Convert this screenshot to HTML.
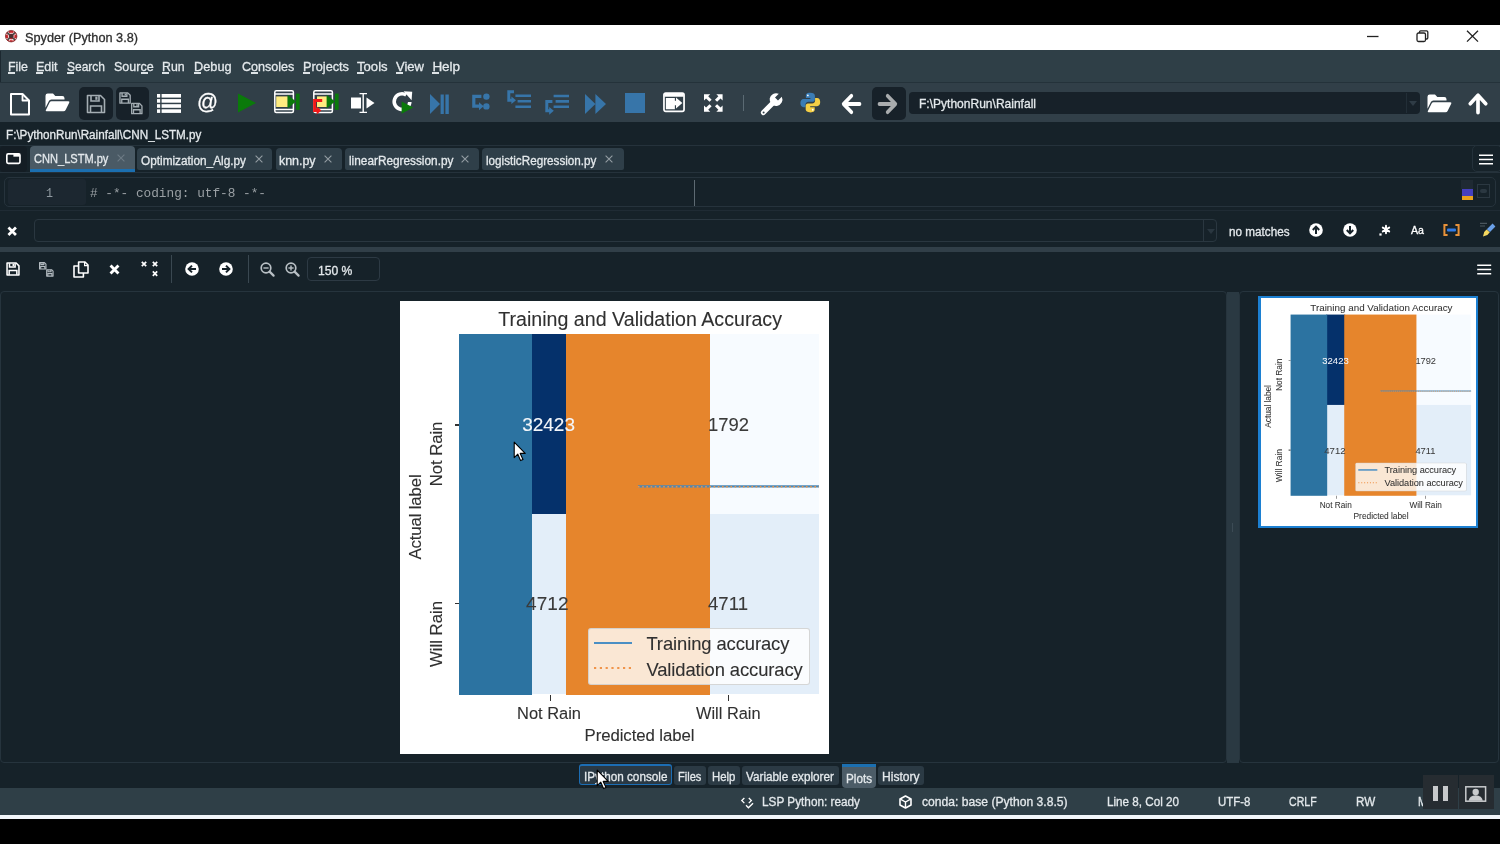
<!DOCTYPE html>
<html lang="en"><head><meta charset="utf-8"><title>Spyder (Python 3.8)</title><style>
html,body{margin:0;padding:0;background:#000;}
body{width:1500px;height:844px;position:relative;overflow:hidden;font-family:'Liberation Sans',sans-serif;}
.b{position:absolute;}
.i{position:absolute;overflow:visible;}
.t{position:absolute;white-space:pre;line-height:20px;height:20px;-webkit-text-stroke:0.3px currentColor;}
#app{position:absolute;left:0;top:0;width:1500px;height:844px;filter:blur(0.7px);}
.plot{position:absolute;left:0;top:0;width:429px;height:453.6px;}
.plot .t{-webkit-text-stroke:0.1px currentColor;}
</style></head>
<body>
<div id="app">
<div class="b" style="left:-10px;top:50.5px;width:1520px;height:765px;background:#162229;"></div><div class="b" style="left:-10px;top:25px;width:1520px;height:25.3px;background:#ffffff;"></div><svg class="i" style="left:5px;top:30px" width="12.4" height="12.4" viewBox="0 0 16 16" ><circle cx="8" cy="8" r="7.4" fill="#c8262c"/><path d="M1 6 Q8 2.6 15 6 M1.4 11 Q8 14 14.6 11 M4.6 1.6 Q3.4 8 5.8 14.6 M11.4 1.6 Q12.6 8 10.2 14.6" stroke="#f4dcdc" stroke-width="1.3" fill="none"/><path d="M3 3.4 L6.4 6.6 M13 3.4 L9.6 6.6 M3.4 13 L6.4 9.6 M12.8 12.8 L9.6 9.6" stroke="#4a4a4a" stroke-width="2" fill="none"/><circle cx="8" cy="8" r="2.7" fill="#4a3030"/><circle cx="8" cy="8" r="7.4" fill="none" stroke="#7a2a2a" stroke-width="1"/></svg><span class="t " style="left:25.0px;top:28.1px;font-size:13px;transform:scaleX(0.9773);transform-origin:0 50%;color:#2e2e2e;">Spyder (Python 3.8)</span><svg class="i" style="left:1360px;top:28px" width="130" height="18" viewBox="0 0 130 18" ><path d="M7 8.5 H18.5" stroke="#222" stroke-width="1.3" fill="none"/><rect x="57" y="5" width="8.5" height="8.5" rx="1.5" fill="none" stroke="#222" stroke-width="1.3"/><path d="M59.5 5 V4 Q59.5 2.8 60.7 2.8 H66.6 Q67.8 2.8 67.8 4 V9.8 Q67.8 11 66.6 11 H65.5" fill="none" stroke="#222" stroke-width="1.3"/><path d="M107 2.8 L118 13.6 M118 2.8 L107 13.6" stroke="#222" stroke-width="1.3" fill="none"/></svg><div class="b" style="left:-10px;top:50.3px;width:1520px;height:32.2px;background:#2f3f47;"></div><div class="b" style="left:-10px;top:81.5px;width:1520px;height:1.5px;background:#24323a;"></div><div class="b" style="left:-1px;top:50.6px;width:2.2px;height:31px;background:#1c2830;"></div><span class="t m" style="left:7.6px;top:56.7px;font-size:13.5px;transform:scaleX(0.9189);transform-origin:0 50%;color:#e4e9ec;">File</span><div class="b" style="left:7.6px;top:72.4px;width:7px;height:1.3px;background:#dde3e6;"></div><span class="t m" style="left:36.4px;top:56.7px;font-size:13.5px;transform:scaleX(0.9284);transform-origin:0 50%;color:#e4e9ec;">Edit</span><div class="b" style="left:36.4px;top:72.4px;width:7px;height:1.3px;background:#dde3e6;"></div><span class="t m" style="left:67.0px;top:56.7px;font-size:13.5px;transform:scaleX(0.8882);transform-origin:0 50%;color:#e4e9ec;">Search</span><div class="b" style="left:67.0px;top:72.4px;width:7px;height:1.3px;background:#dde3e6;"></div><span class="t m" style="left:114.0px;top:56.7px;font-size:13.5px;transform:scaleX(0.9256);transform-origin:0 50%;color:#e4e9ec;">Source</span><div class="b" style="left:140.5px;top:72.4px;width:7px;height:1.3px;background:#dde3e6;"></div><span class="t m" style="left:162.4px;top:56.7px;font-size:13.5px;transform:scaleX(0.9126);transform-origin:0 50%;color:#e4e9ec;">Run</span><div class="b" style="left:162.4px;top:72.4px;width:7px;height:1.3px;background:#dde3e6;"></div><span class="t m" style="left:194.4px;top:56.7px;font-size:13.5px;transform:scaleX(0.9448);transform-origin:0 50%;color:#e4e9ec;">Debug</span><div class="b" style="left:194.4px;top:72.4px;width:7px;height:1.3px;background:#dde3e6;"></div><span class="t m" style="left:241.6px;top:56.7px;font-size:13.5px;transform:scaleX(0.9310);transform-origin:0 50%;color:#e4e9ec;">Consoles</span><div class="b" style="left:250.5px;top:72.4px;width:7px;height:1.3px;background:#dde3e6;"></div><span class="t m" style="left:303.0px;top:56.7px;font-size:13.5px;transform:scaleX(0.9430);transform-origin:0 50%;color:#e4e9ec;">Projects</span><div class="b" style="left:303.0px;top:72.4px;width:7px;height:1.3px;background:#dde3e6;"></div><span class="t m" style="left:357.0px;top:56.7px;font-size:13.5px;transform:scaleX(0.9709);transform-origin:0 50%;color:#e4e9ec;">Tools</span><div class="b" style="left:357.0px;top:72.4px;width:7px;height:1.3px;background:#dde3e6;"></div><span class="t m" style="left:396.0px;top:56.7px;font-size:13.5px;transform:scaleX(0.9645);transform-origin:0 50%;color:#e4e9ec;">View</span><div class="b" style="left:396.0px;top:72.4px;width:7px;height:1.3px;background:#dde3e6;"></div><span class="t m" style="left:432.4px;top:56.7px;font-size:13.5px;letter-spacing:-0.055px;color:#e4e9ec;">Help</span><div class="b" style="left:432.4px;top:72.4px;width:7px;height:1.3px;background:#dde3e6;"></div><div class="b" style="left:-10px;top:83px;width:1520px;height:39.3px;background:#313f48;"></div><svg class="i" style="left:9px;top:92px" width="22" height="24" viewBox="0 0 22 24" ><path d="M2 2 H13.5 L20 8.5 V22.5 H2 Z" fill="none" stroke="#fff" stroke-width="2" stroke-linejoin="round"/><path d="M13.5 2 V8.5 H20" fill="none" stroke="#fff" stroke-width="1.8" stroke-linejoin="round"/></svg><svg class="i" style="left:44.5px;top:93px" width="25" height="19" viewBox="0 0 25 19" ><path d="M0.5 2.8 Q0.5 0.6 2.7 0.6 H8 L10.3 3 H17.3 Q19.5 3 19.5 5.2 V6.6 H6.4 Q4.6 6.6 3.8 8.2 L0.5 14.8 Z" fill="#fff"/><path d="M6.6 8.2 H23.4 Q25 8.2 24.2 9.8 L20.6 17 Q20 18.3 18.5 18.3 H1.6 Q0.2 18.3 0.9 17 L4.6 9.5 Q5.2 8.2 6.6 8.2 Z" fill="#fff"/></svg><div class="b" style="left:79px;top:86.5px;width:33.5px;height:33.5px;background:#172129;border-radius:5px"></div><svg class="i" style="left:85.5px;top:93.5px" width="20" height="20" viewBox="0 0 20 20" ><path d="M1.5 1.5 H14.5 L18.5 5.5 V18.5 H1.5 Z" fill="none" stroke="#a4adb3" stroke-width="1.6" stroke-linejoin="round"/><path d="M5 1.8 V7 H13 V1.8" fill="none" stroke="#a4adb3" stroke-width="1.6"/><rect x="9.3" y="2.6" width="2.2" height="3.2" fill="#a4adb3"/><path d="M4.5 18.3 V12 H15.5 V18.3" fill="none" stroke="#a4adb3" stroke-width="1.6"/></svg><div class="b" style="left:115.5px;top:86.5px;width:33.5px;height:33.5px;background:#172129;border-radius:5px"></div><svg class="i" style="left:119.4px;top:92.4px" width="24.2" height="22.6" viewBox="0 0 40 37.5" ><g transform="translate(0,0)"><path d="M1.5 1.5 H14.5 L18.5 5.5 V18.5 H1.5 Z" fill="none" stroke="#a4adb3" stroke-width="2.2" stroke-linejoin="round"/><path d="M5 1.8 V7 H13 V1.8" fill="none" stroke="#a4adb3" stroke-width="2.2"/><rect x="9.3" y="2.6" width="2.2" height="3.2" fill="#a4adb3"/><path d="M4.5 18.3 V12 H15.5 V18.3" fill="none" stroke="#a4adb3" stroke-width="2.2"/></g><g transform="translate(19.5,17.5)"><path d="M1.5 1.5 H14.5 L18.5 5.5 V18.5 H1.5 Z" fill="none" stroke="#a4adb3" stroke-width="2.2" stroke-linejoin="round"/><path d="M5 1.8 V7 H13 V1.8" fill="none" stroke="#a4adb3" stroke-width="2.2"/><rect x="9.3" y="2.6" width="2.2" height="3.2" fill="#a4adb3"/><path d="M4.5 18.3 V12 H15.5 V18.3" fill="none" stroke="#a4adb3" stroke-width="2.2"/></g></svg><svg class="i" style="left:156.7px;top:93.5px" width="24" height="19" viewBox="0 0 24 19" ><rect x="0" y="0.0" width="3.2" height="3.6" fill="#fff"/><rect x="4.6" y="0.0" width="19.4" height="3.6" fill="#fff"/><rect x="0" y="5.1" width="3.2" height="3.6" fill="#fff"/><rect x="4.6" y="5.1" width="19.4" height="3.6" fill="#fff"/><rect x="0" y="10.2" width="3.2" height="3.6" fill="#fff"/><rect x="4.6" y="10.2" width="19.4" height="3.6" fill="#fff"/><rect x="0" y="15.299999999999999" width="3.2" height="3.6" fill="#fff"/><rect x="4.6" y="15.299999999999999" width="19.4" height="3.6" fill="#fff"/></svg><span class="t " style="left:196.6px;top:92.1px;font-size:22px;transform:scaleX(0.9399);transform-origin:0 50%;color:#fff;">@</span><svg class="i" style="left:237px;top:93px" width="20" height="20" viewBox="0 0 20 20" ><path d="M1 0.5 L19 10 L1 19.5 Z" fill="#0a7a0a"/></svg><svg class="i" style="left:273px;top:89px" width="28" height="26" viewBox="0 0 28 26" ><rect x="1.8" y="1.8" width="18.6" height="21.6" rx="1.5" fill="none" stroke="#fff" stroke-width="1.5"/><path d="M2 5 H20 M2 20.5 H20" stroke="#fff" stroke-width="1.3"/><rect x="3.2" y="7.4" width="11.5" height="10.6" fill="#ffec80"/><path d="M14.6 5.8 L23 12.6 L14.6 19.4 Z" fill="#0a7a0a"/><rect x="23" y="4.6" width="3.6" height="16.2" fill="#0a7a0a"/></svg><svg class="i" style="left:311px;top:89px" width="28" height="27" viewBox="0 0 28 27" ><rect x="2.8" y="1.8" width="18.6" height="21.6" rx="1.5" fill="none" stroke="#fff" stroke-width="1.5"/><path d="M3 5 H21 M3 20.5 H21" stroke="#fff" stroke-width="1.3"/><rect x="6" y="7.4" width="10" height="10.6" fill="#ffec80"/><path d="M15.6 5.8 L24 12.6 L15.6 19.4 Z" fill="#0a7a0a"/><rect x="24" y="4.6" width="3.6" height="16.2" fill="#0a7a0a"/><path d="M11.2 11.6 H3.6 V21.4 H6.4" fill="none" stroke="#f21818" stroke-width="3"/><path d="M5.6 17.6 L10.4 21.4 L5.6 25.4 Z" fill="#f21818"/></svg><svg class="i" style="left:350px;top:92px" width="26" height="22" viewBox="0 0 26 22" ><rect x="1" y="5.5" width="10" height="11" fill="#fff"/><path d="M9.5 1.6 H17 M9.5 20.4 H17 M13.2 1.6 V20.4" stroke="#fff" stroke-width="1.4" fill="none"/><path d="M16.5 5.5 L24.5 11 L16.5 16.5 Z" fill="#fff"/></svg><svg class="i" style="left:391px;top:90px" width="24" height="26" viewBox="0 0 24 26" ><path d="M15.2 5 A7.8 7.8 0 1 0 18.8 12" fill="none" stroke="#fff" stroke-width="3.6"/><path d="M12.6 1.2 L21.2 1.8 L20.6 10.2 Z" fill="#fff"/><path d="M10.6 11.6 L22.2 17.6 L10.6 23.8 Z" fill="#0a7a0a"/></svg><svg class="i" style="left:430px;top:93.5px" width="19" height="20" viewBox="0 0 19 20" ><path d="M0 0 L10 10 L0 20 Z" fill="#3775a9"/><rect x="10.6" y="0.5" width="3.2" height="19.5" fill="#3775a9"/><rect x="15.4" y="0.5" width="3.4" height="19.5" fill="#3775a9"/></svg><svg class="i" style="left:471.5px;top:93px" width="19" height="18" viewBox="0 0 19 18" ><path d="M9.4 3.4 H1.8 V13.2 H8" fill="none" stroke="#3775a9" stroke-width="3.2"/><path d="M7 9.2 L11.6 13.2 L7 17.2 Z" fill="#3775a9"/><circle cx="14.4" cy="3.6" r="3.2" fill="#3775a9"/><circle cx="14.4" cy="13.4" r="3.2" fill="#3775a9"/></svg><svg class="i" style="left:506.5px;top:89.5px" width="25" height="20" viewBox="0 0 25 20" ><path d="M7 1.8 H1.8 V10.2 H5.2" fill="none" stroke="#3775a9" stroke-width="3"/><path d="M4.4 6.4 L9 10.2 L4.4 14 Z" fill="#3775a9"/><path d="M8.4 5.8 H24 M10.6 11.2 H24 M8.4 16.8 H24" stroke="#3775a9" stroke-width="2.6"/></svg><svg class="i" style="left:545px;top:94px" width="25" height="21" viewBox="0 0 25 21" ><path d="M7.4 7.4 H1.8 V16.8 H5" fill="none" stroke="#3775a9" stroke-width="3"/><path d="M4.2 13 L8.8 16.8 L4.2 20.8 Z" fill="#3775a9"/><path d="M8.6 2 H24 M10.6 7.4 H24 M8.6 12.8 H24" stroke="#3775a9" stroke-width="2.6"/></svg><svg class="i" style="left:585px;top:93.5px" width="21" height="20" viewBox="0 0 21 20" ><path d="M0 0 L10.4 10 L0 20 Z M10.4 0 L21 10 L10.4 20 Z" fill="#3775a9"/></svg><div class="b" style="left:624.6px;top:93px;width:20.4px;height:20.4px;background:#3775a9;"></div><svg class="i" style="left:663px;top:91.6px" width="22" height="20.4" viewBox="0 0 23 21" ><rect x="1" y="1" width="21" height="19" rx="1.8" fill="none" stroke="#fff" stroke-width="1.8"/><rect x="1.4" y="1.4" width="20.2" height="3.4" fill="#fff"/><path d="M3 6 H12.4 V9 H13.6 V5.6 L20.2 11.4 L13.6 17.2 V13.8 H12.4 V18 H3 Z" fill="#fff"/></svg><svg class="i" style="left:703.8px;top:94.2px" width="18.6" height="18" viewBox="0 0 19 18" ><g><path d="M0 0 H6.4 L4.3 2.1 L7.8 5.6 L5.6 7.8 L2.1 4.3 L0 6.4 Z" fill="#fff"/></g><g transform="translate(19,0) scale(-1,1)"><path d="M0 0 H6.4 L4.3 2.1 L7.8 5.6 L5.6 7.8 L2.1 4.3 L0 6.4 Z" fill="#fff"/></g><g transform="translate(0,18) scale(1,-1)"><path d="M0 0 H6.4 L4.3 2.1 L7.8 5.6 L5.6 7.8 L2.1 4.3 L0 6.4 Z" fill="#fff"/></g><g transform="translate(19,18) scale(-1,-1)"><path d="M0 0 H6.4 L4.3 2.1 L7.8 5.6 L5.6 7.8 L2.1 4.3 L0 6.4 Z" fill="#fff"/></g></svg><div class="b" style="left:743px;top:95px;width:1.2px;height:15.5px;background:#5b6a73;"></div><svg class="i" style="left:760px;top:92px" width="23" height="24" viewBox="0 0 23 24" ><path d="M3.4 20.6 L13.6 10.2" stroke="#fff" stroke-width="5" stroke-linecap="round" fill="none"/><path d="M21.6 4.4 L17.8 8.2 L14.8 5.2 L18.6 1.4 A6.4 6.4 0 1 0 21.6 4.4 Z" fill="#fff" transform="translate(0.2,0.4)"/><circle cx="3.6" cy="20.4" r="1" fill="#32414a"/></svg><svg class="i" style="left:799.8px;top:92.4px" width="20.6" height="21.2" viewBox="0 0 21 21" ><path d="M10.3 0.5 C6.6 0.5 6 2 6 3.4 V5.8 H10.6 V6.8 H3.6 C1.6 6.8 0.4 8.6 0.4 11 C0.4 13.6 1.6 15.2 3.6 15.2 H5.6 V12.4 C5.6 10.8 7 9.6 8.6 9.6 H13 C14.4 9.6 15.2 8.6 15.2 7.2 V3.4 C15.2 1.8 13.6 0.5 10.3 0.5 Z" fill="#3b7cb4"/><circle cx="8" cy="3.2" r="0.9" fill="#fff"/><path d="M10.7 20.5 C14.4 20.5 15 19 15 17.6 V15.2 H10.4 V14.2 H17.4 C19.4 14.2 20.6 12.4 20.6 10 C20.6 7.4 19.4 5.8 17.4 5.8 H15.4 V8.6 C15.4 10.2 14 11.4 12.4 11.4 H8 C6.6 11.4 5.8 12.4 5.8 13.8 V17.6 C5.8 19.2 7.4 20.5 10.7 20.5 Z" fill="#f5cf45"/><circle cx="13" cy="17.8" r="0.9" fill="#fff"/></svg><svg class="i" style="left:841px;top:93.4px" width="21" height="22" viewBox="0 0 21 20" preserveAspectRatio="none"><path d="M10.4 2.6 L2.6 10 L10.4 17.4 M3.4 10 H18.6" fill="none" stroke="#fff" stroke-width="3.5" stroke-linecap="round" stroke-linejoin="round"/></svg><div class="b" style="left:872px;top:86.5px;width:34px;height:33.5px;background:#172129;border-radius:5px"></div><svg class="i" style="left:876.8px;top:93.4px" width="21" height="22" viewBox="0 0 21 20" preserveAspectRatio="none"><g transform="translate(21,0) scale(-1,1)"><path d="M10.4 2.6 L2.6 10 L10.4 17.4 M3.4 10 H18.6" fill="none" stroke="#a9acae" stroke-width="3.5" stroke-linecap="round" stroke-linejoin="round"/></g></svg><div class="b" style="left:909px;top:92px;width:511px;height:22px;background:#172129;border-radius:4px"></div><div class="b" style="left:1406px;top:93px;width:1px;height:20px;background:#222e37;"></div><svg class="i" style="left:1408.5px;top:100.5px" width="8" height="5" viewBox="0 0 8 5" ><path d="M0 0 H8 L4 5 Z" fill="#2f3c46"/></svg><span class="t " style="left:919.0px;top:94.1px;font-size:13px;transform:scaleX(0.9252);transform-origin:0 50%;color:#e4e9ec;">F:\PythonRun\Rainfall</span><svg class="i" style="left:1427px;top:93.5px" width="25" height="19" viewBox="0 0 25 19" ><path d="M0.5 2.8 Q0.5 0.6 2.7 0.6 H8 L10.3 3 H17.3 Q19.5 3 19.5 5.2 V6.6 H6.4 Q4.6 6.6 3.8 8.2 L0.5 14.8 Z" fill="#fff"/><path d="M6.6 8.2 H23.4 Q25 8.2 24.2 9.8 L20.6 17 Q20 18.3 18.5 18.3 H1.6 Q0.2 18.3 0.9 17 L4.6 9.5 Q5.2 8.2 6.6 8.2 Z" fill="#fff"/></svg><svg class="i" style="left:1467.4px;top:93.4px" width="22" height="21.6" viewBox="0 0 21 20" preserveAspectRatio="none"><g transform="rotate(90 10.5 10)"><path d="M10.4 2.6 L2.6 10 L10.4 17.4 M3.4 10 H18.6" fill="none" stroke="#fff" stroke-width="3.5" stroke-linecap="round" stroke-linejoin="round"/></g></svg><div class="b" style="left:-10px;top:122.6px;width:1520px;height:125px;background:#162229;"></div><span class="t " style="left:5.6px;top:124.8px;font-size:12.5px;transform:scaleX(0.9344);transform-origin:0 50%;color:#e4e9ec;">F:\PythonRun\Rainfall\CNN_LSTM.py</span><div class="b" style="left:-10px;top:144.6px;width:1520px;height:1.2px;background:#25323b;"></div><div class="b" style="left:0px;top:146px;width:27px;height:26px;background:#141d24;border-radius:4px"></div><svg class="i" style="left:6px;top:153.4px" width="14.8" height="11.2" viewBox="0 0 16 12" ><rect x="0.9" y="0.9" width="14.2" height="10.2" rx="1.4" fill="none" stroke="#fff" stroke-width="1.8"/><rect x="8" y="0.9" width="7" height="3" fill="#fff"/></svg><div class="b" style="left:30px;top:146px;width:104.5px;height:26px;background:#4a5a65;border-radius:4px 4px 0 0"></div><div class="b" style="left:30px;top:168.6px;width:104.5px;height:3.4px;background:#1b6fb0;"></div><span class="t " style="left:33.6px;top:148.5px;font-size:12.5px;transform:scaleX(0.8852);transform-origin:0 50%;color:#e4e9ec;">CNN_LSTM.py</span><div class="b" style="left:137px;top:148.4px;width:135.39999999999998px;height:21.4px;background:#2f3f49;border-radius:4px 4px 2px 2px"></div><span class="t " style="left:141.0px;top:150.7px;font-size:12.5px;transform:scaleX(0.9445);transform-origin:0 50%;color:#e4e9ec;">Optimization_Alg.py</span><div class="b" style="left:275.6px;top:148.4px;width:66.79999999999995px;height:21.4px;background:#2f3f49;border-radius:4px 4px 2px 2px"></div><span class="t " style="left:279.0px;top:150.7px;font-size:12.5px;letter-spacing:-0.049px;color:#e4e9ec;">knn.py</span><div class="b" style="left:345px;top:148.4px;width:134.39999999999998px;height:21.4px;background:#2f3f49;border-radius:4px 4px 2px 2px"></div><span class="t " style="left:348.6px;top:150.7px;font-size:12.5px;transform:scaleX(0.9449);transform-origin:0 50%;color:#e4e9ec;">linearRegression.py</span><div class="b" style="left:482px;top:148.4px;width:141.60000000000002px;height:21.4px;background:#2f3f49;border-radius:4px 4px 2px 2px"></div><span class="t " style="left:485.6px;top:150.7px;font-size:12.5px;transform:scaleX(0.9347);transform-origin:0 50%;color:#e4e9ec;">logisticRegression.py</span><svg class="i" style="left:116.8px;top:153.6px" width="8" height="8" viewBox="0 0 8 8" ><path d="M0.6 0.6 L7.4 7.4 M7.4 0.6 L0.6 7.4" stroke="#6d7b85" stroke-width="1.1"/></svg><svg class="i" style="left:255px;top:155px" width="8" height="8" viewBox="0 0 8 8" ><path d="M0.6 0.6 L7.4 7.4 M7.4 0.6 L0.6 7.4" stroke="#939da3" stroke-width="1.1"/></svg><svg class="i" style="left:324px;top:155px" width="8" height="8" viewBox="0 0 8 8" ><path d="M0.6 0.6 L7.4 7.4 M7.4 0.6 L0.6 7.4" stroke="#939da3" stroke-width="1.1"/></svg><svg class="i" style="left:461px;top:155px" width="8" height="8" viewBox="0 0 8 8" ><path d="M0.6 0.6 L7.4 7.4 M7.4 0.6 L0.6 7.4" stroke="#939da3" stroke-width="1.1"/></svg><svg class="i" style="left:605.4px;top:155px" width="8" height="8" viewBox="0 0 8 8" ><path d="M0.6 0.6 L7.4 7.4 M7.4 0.6 L0.6 7.4" stroke="#939da3" stroke-width="1.1"/></svg><div class="b" style="left:-10px;top:172px;width:1520px;height:1.2px;background:#25323b;"></div><div class="b" style="left:1472px;top:145.4px;width:30px;height:27px;background:#162229;border:1.2px solid #24313a;border-radius:5px;box-sizing:border-box"></div><svg class="i" style="left:1478.6px;top:153.8px" width="14" height="11" viewBox="0 0 14 11" ><path d="M0 1.2 H14 M0 5.5 H14 M0 9.8 H14" stroke="#fff" stroke-width="1.6"/></svg><div class="b" style="left:4px;top:176.6px;width:1492px;height:30px;background:#162229;border:1.2px solid #26333c;border-radius:5px;box-sizing:border-box"></div><div class="b" style="left:8px;top:178.6px;width:78px;height:26.4px;background:#1c2730;border-radius:3px"></div><span class="t " style="left:45.5px;top:183.9px;font-size:12.75px;transform:scaleX(0.9143);transform-origin:0 50%;color:#909aa1;font-family:'Liberation Mono',monospace;-webkit-text-stroke:0;">1</span><span class="t " style="left:90.0px;top:183.7px;font-size:12.75px;letter-spacing:0.001px;color:#9aa0a4;font-family:'Liberation Mono',monospace;-webkit-text-stroke:0;"># -*- coding: utf-8 -*-</span><div class="b" style="left:693.8px;top:180px;width:1.2px;height:25.6px;background:#5d6a72;"></div><div class="b" style="left:1461px;top:180.4px;width:12px;height:9px;background:#1f2a33;"></div><div class="b" style="left:1462.4px;top:188.8px;width:10.4px;height:7.6px;background:#4540bd;"></div><div class="b" style="left:1462.4px;top:196.2px;width:10.4px;height:3.8px;background:#e9a21c;"></div><div class="b" style="left:1477px;top:184px;width:12.6px;height:14px;background:none;border:1px solid #2b3841;box-sizing:border-box"></div><div class="b" style="left:1480px;top:189px;width:7px;height:4px;background:#2b3841;border-radius:2px"></div><div class="b" style="left:-10px;top:209.6px;width:1520px;height:1px;background:#1f2b34;"></div><svg class="i" style="left:7.2px;top:225.6px" width="10.4" height="10.4" viewBox="0 0 10 10" ><path d="M1.4 1.4 L8.6 8.6 M8.6 1.4 L1.4 8.6" stroke="#fff" stroke-width="2.6"/></svg><div class="b" style="left:34.4px;top:218.6px;width:1183px;height:23.6px;background:#162229;border:1.2px solid #2a3740;border-radius:4px;box-sizing:border-box"></div><div class="b" style="left:1203px;top:219.6px;width:1px;height:21.6px;background:#2a3740;"></div><svg class="i" style="left:1206.5px;top:228.5px" width="8" height="5" viewBox="0 0 8 5" ><path d="M0 0 H8 L4 5 Z" fill="#2a3740"/></svg><span class="t " style="left:1229.0px;top:222.0px;font-size:12.5px;transform:scaleX(0.9377);transform-origin:0 50%;color:#e4e9ec;">no matches</span><svg class="i" style="left:1308.6px;top:223px" width="14" height="14" viewBox="0 0 14 14" ><circle cx="7" cy="7" r="6.8" fill="#fff"/><g transform="rotate(0 7 7)"><path d="M7 11 V4.2 M3.8 7 L7 3.6 L10.2 7" stroke="#162229" stroke-width="2" fill="none"/></g></svg><svg class="i" style="left:1342.6px;top:223px" width="14" height="14" viewBox="0 0 14 14" ><circle cx="7" cy="7" r="6.8" fill="#fff"/><g transform="rotate(180 7 7)"><path d="M7 11 V4.2 M3.8 7 L7 3.6 L10.2 7" stroke="#162229" stroke-width="2" fill="none"/></g></svg><svg class="i" style="left:1378.6px;top:225px" width="11" height="11" viewBox="0 0 11 11" ><rect x="0.4" y="8.4" width="2.2" height="2.2" fill="#fff"/><path d="M7 0.8 V8.2 M3.8 2.6 L10.2 6.4 M10.2 2.6 L3.8 6.4" stroke="#fff" stroke-width="1.9" stroke-linecap="round"/><circle cx="7" cy="4.5" r="2" fill="#fff"/></svg><span class="t " style="left:1411.0px;top:220.3px;font-size:10.8px;transform:scaleX(0.9835);transform-origin:0 50%;color:#fff;">Aa</span><svg class="i" style="left:1443px;top:224.2px" width="17" height="12" viewBox="0 0 17 12" ><path d="M4.6 1 H1.4 V11 H4.6 M12.4 1 H15.6 V11 H12.4" stroke="#e8923a" stroke-width="2" fill="none"/><rect x="4" y="4.6" width="9" height="3" rx="1" fill="#2f7be8"/></svg><svg class="i" style="left:1479px;top:221px" width="17" height="17" viewBox="0 0 17 17" ><path d="M1 2.4 H8 M1 5 H6" stroke="#4a565e" stroke-width="1.2"/><path d="M13.6 2.6 L16.4 5.4 L11 11 L7.8 8.2 Z" fill="#6aa0e8"/><path d="M7.6 8.4 L10.8 11.2 L8.4 14 L4 15.6 L5.2 11 Z" fill="#f5d860"/></svg><div class="b" style="left:-10px;top:247px;width:1520px;height:5px;background:#313f48;"></div><div class="b" style="left:-10px;top:252px;width:1520px;height:40px;background:#162229;"></div><svg class="i" style="left:6.2px;top:262px" width="14" height="14" viewBox="0 0 20 20" ><path d="M1.5 1.5 H14.5 L18.5 5.5 V18.5 H1.5 Z" fill="none" stroke="#fff" stroke-width="2.2" stroke-linejoin="round"/><path d="M5 1.8 V7 H13 V1.8" fill="none" stroke="#fff" stroke-width="2.2"/><rect x="9.3" y="2.6" width="2.2" height="3.2" fill="#fff"/><path d="M4.5 18.3 V12 H15.5 V18.3" fill="none" stroke="#fff" stroke-width="2.2"/></svg><svg class="i" style="left:39px;top:262px" width="15" height="15" viewBox="0 0 40 40" ><g><path d="M1.5 1.5 H14.5 L18.5 5.5 V18.5 H1.5 Z" fill="none" stroke="#b4bcc1" stroke-width="3" stroke-linejoin="round"/><path d="M5 1.8 V7 H13 V1.8" fill="none" stroke="#b4bcc1" stroke-width="3"/><rect x="9.3" y="2.6" width="2.2" height="3.2" fill="#b4bcc1"/><path d="M4.5 18.3 V12 H15.5 V18.3" fill="none" stroke="#b4bcc1" stroke-width="3"/></g><g transform="translate(19,19)"><path d="M1.5 1.5 H14.5 L18.5 5.5 V18.5 H1.5 Z" fill="none" stroke="#b4bcc1" stroke-width="3" stroke-linejoin="round"/><path d="M5 1.8 V7 H13 V1.8" fill="none" stroke="#b4bcc1" stroke-width="3"/><rect x="9.3" y="2.6" width="2.2" height="3.2" fill="#b4bcc1"/><path d="M4.5 18.3 V12 H15.5 V18.3" fill="none" stroke="#b4bcc1" stroke-width="3"/></g></svg><svg class="i" style="left:73px;top:261px" width="16" height="17" viewBox="0 0 16 17" ><path d="M5.6 1 H12 L15 4 V12 H5.6 Z" fill="none" stroke="#fff" stroke-width="1.6" stroke-linejoin="round"/><path d="M5.6 5 H1 V16 H10.4 V12" fill="none" stroke="#fff" stroke-width="1.6" stroke-linejoin="round"/><path d="M11.6 1 V4.6 H15" fill="none" stroke="#fff" stroke-width="1.2"/></svg><svg class="i" style="left:109px;top:263.6px" width="11" height="11" viewBox="0 0 10 10" ><path d="M1.4 1.4 L8.6 8.6 M8.6 1.4 L1.4 8.6" stroke="#fff" stroke-width="2.6"/></svg><svg class="i" style="left:140px;top:260px" width="19" height="17" viewBox="0 0 19 17" ><g transform="translate(1,1)"><path d="M0.8 0.8 L5.2 5.2 M5.2 0.8 L0.8 5.2" stroke="#fff" stroke-width="1.7"/></g><g transform="translate(12,1)"><path d="M0.8 0.8 L5.2 5.2 M5.2 0.8 L0.8 5.2" stroke="#fff" stroke-width="1.7"/></g><g transform="translate(12,10.6)"><path d="M0.8 0.8 L5.2 5.2 M5.2 0.8 L0.8 5.2" stroke="#fff" stroke-width="1.7"/></g></svg><div class="b" style="left:170.6px;top:255px;width:1.2px;height:28px;background:#3a4851;"></div><svg class="i" style="left:185.0px;top:262.0px" width="14" height="14" viewBox="0 0 14 14" ><circle cx="7" cy="7" r="6.8" fill="#fff"/><g transform="rotate(0 7 7)"><path d="M11 7 H4 M7 3.6 L3.6 7 L7 10.4" stroke="#162229" stroke-width="2" fill="none"/></g></svg><svg class="i" style="left:219.0px;top:262.0px" width="14" height="14" viewBox="0 0 14 14" ><circle cx="7" cy="7" r="6.8" fill="#fff"/><g transform="rotate(180 7 7)"><path d="M11 7 H4 M7 3.6 L3.6 7 L7 10.4" stroke="#162229" stroke-width="2" fill="none"/></g></svg><div class="b" style="left:247.6px;top:255px;width:1.2px;height:28px;background:#3a4851;"></div><svg class="i" style="left:260px;top:262px" width="15" height="15" viewBox="0 0 15 15" ><circle cx="6" cy="6" r="4.8" fill="none" stroke="#b9c0c5" stroke-width="1.7"/><path d="M9.6 9.6 L13.6 13.6" stroke="#b9c0c5" stroke-width="2.2" stroke-linecap="round"/><path d="M3.4 6 H8.6" stroke="#b9c0c5" stroke-width="1.4"/></svg><svg class="i" style="left:285.4px;top:262px" width="15" height="15" viewBox="0 0 15 15" ><circle cx="6" cy="6" r="4.8" fill="none" stroke="#b9c0c5" stroke-width="1.7"/><path d="M9.6 9.6 L13.6 13.6" stroke="#b9c0c5" stroke-width="2.2" stroke-linecap="round"/><path d="M3.4 6 H8.6" stroke="#b9c0c5" stroke-width="1.4"/><path d="M6 3.4 V8.6" stroke="#b9c0c5" stroke-width="1.4"/></svg><div class="b" style="left:307px;top:257.2px;width:73.4px;height:23.6px;background:#162229;border:1.2px solid #2d3a44;border-radius:4px;box-sizing:border-box"></div><span class="t " style="left:318.0px;top:260.5px;font-size:12.5px;transform:scaleX(0.9703);transform-origin:0 50%;color:#e4e9ec;">150 %</span><svg class="i" style="left:1477.2px;top:263.6px" width="14.4" height="11" viewBox="0 0 14 11" ><path d="M0 1.2 H14 M0 5.5 H14 M0 9.8 H14" stroke="#fff" stroke-width="1.6"/></svg><div class="b" style="left:0.2px;top:290.6px;width:1226.6px;height:472px;background:#162229;border:1.3px solid #26343d;border-radius:4px;box-sizing:border-box"></div><div class="b" style="left:1226.6px;top:292px;width:12px;height:471px;background:#2a3942;"></div><div class="b" style="left:1232px;top:523px;width:1px;height:9px;background:#3c4b55;"></div><div class="b" style="left:1239.2px;top:290.6px;width:260px;height:472px;background:#162229;border:1.3px solid #26343d;border-radius:4px;box-sizing:border-box"></div><div class="b" style="left:400px;top:300.8px;width:429px;height:453.6px;background:#fff"><div class="plot"><div class="b" style="left:310px;top:33px;width:109px;height:180px;background:#f7fbff;"></div><div class="b" style="left:130px;top:213px;width:38px;height:180px;background:#e3eef9;"></div><div class="b" style="left:310px;top:213px;width:109px;height:180px;background:#e3eef9;"></div><div class="b" style="left:130px;top:33px;width:38px;height:180px;background:#05316b;"></div><div class="b" style="left:59.2px;top:33px;width:72.4px;height:361px;background:#2c73a1;"></div><div class="b" style="left:166.4px;top:33px;width:143.6px;height:361px;background:#e6852c;"></div><svg class="i" style="left:238px;top:182.8px" width="181" height="4" viewBox="0 0 181 4" ><path d="M0 2.4 H181" stroke="#4d88b6" stroke-width="2.2"/> <path d="M0 2.8 H181" stroke="#e8934a" stroke-width="1.6" stroke-dasharray="1.6 2.6"/></svg><div class="b" style="left:149.6px;top:394px;width:1.2px;height:6px;background:#333;"></div><div class="b" style="left:328.2px;top:394px;width:1.2px;height:6px;background:#333;"></div><div class="b" style="left:54.6px;top:123.6px;width:4.6px;height:1.2px;background:#333;"></div><div class="b" style="left:54.6px;top:302.4px;width:4.6px;height:1.2px;background:#333;"></div><span class="t " style="left:98.2px;top:8.5px;font-size:19.6px;letter-spacing:0.020px;color:#303030;">Training and Validation Accuracy</span><span class="t " style="left:122.2px;top:114.7px;font-size:19px;letter-spacing:-0.011px;color:#f4f6fa;">32423</span><span class="t " style="left:307.8px;top:114.7px;font-size:19px;transform:scaleX(0.9697);transform-origin:0 50%;color:#3a3a3a;">1792</span><span class="t " style="left:126.0px;top:293.7px;font-size:19px;letter-spacing:0.106px;color:#3a3a3a;">4712</span><span class="t " style="left:307.8px;top:293.7px;font-size:19px;transform:scaleX(0.9790);transform-origin:0 50%;color:#3a3a3a;">4711</span><span class="t " style="left:117.4px;top:403.7px;font-size:16.8px;transform:scaleX(0.9801);transform-origin:0 50%;color:#303030;">Not Rain</span><span class="t " style="left:296.0px;top:403.7px;font-size:16.8px;transform:scaleX(0.9758);transform-origin:0 50%;color:#303030;">Will Rain</span><span class="t " style="left:184.6px;top:424.9px;font-size:16.8px;letter-spacing:-0.087px;color:#303030;">Predicted label</span><span class="t " style="left:4.6px;top:143.2px;font-size:16.8px;letter-spacing:-0.100px;color:#303030;transform:rotate(-90deg);transform-origin:center;">Not Rain</span><span class="t " style="left:3.8px;top:323.7px;font-size:16.8px;letter-spacing:-0.000px;color:#303030;transform:rotate(-90deg);transform-origin:center;">Will Rain</span><span class="t " style="left:-26.8px;top:206.3px;font-size:16.8px;letter-spacing:-0.142px;color:#303030;transform:rotate(-90deg);transform-origin:center;">Actual label</span><div class="b" style="left:187.8px;top:327.6px;width:222.4px;height:57px;background:rgba(255,255,255,0.8);border:1px solid rgba(204,204,204,0.8);border-radius:3px;box-sizing:border-box"></div><div class="b" style="left:194.2px;top:341.2px;width:37.4px;height:2.4px;background:#4a8fc4;"></div><svg class="i" style="left:194.2px;top:365.6px" width="38" height="4" viewBox="0 0 38 4" ><path d="M0 2 H38" stroke="#f0944a" stroke-width="2.2" stroke-dasharray="2.2 3.6"/></svg><span class="t " style="left:246.4px;top:332.9px;font-size:18.4px;letter-spacing:-0.092px;color:#303030;">Training accuracy</span><span class="t " style="left:246.4px;top:359.0px;font-size:18.4px;letter-spacing:-0.095px;color:#303030;">Validation accuracy</span></div></div><div class="b" style="left:1258.2px;top:295.7px;width:220.2px;height:232.6px;background:#1c80d2;"></div><div class="b" style="left:1260.6px;top:298.2px;width:215.6px;height:227.8px;background:#fff;overflow:hidden"><div class="b" style="left:0;top:0;width:429px;height:453.6px;transform:scale(0.5014,0.502);transform-origin:0 0"><div class="plot"><div class="b" style="left:310px;top:33px;width:109px;height:180px;background:#f7fbff;"></div><div class="b" style="left:130px;top:213px;width:38px;height:180px;background:#e3eef9;"></div><div class="b" style="left:310px;top:213px;width:109px;height:180px;background:#e3eef9;"></div><div class="b" style="left:130px;top:33px;width:38px;height:180px;background:#05316b;"></div><div class="b" style="left:59.2px;top:33px;width:72.4px;height:361px;background:#2c73a1;"></div><div class="b" style="left:166.4px;top:33px;width:143.6px;height:361px;background:#e6852c;"></div><svg class="i" style="left:238px;top:182.8px" width="181" height="4" viewBox="0 0 181 4" ><path d="M0 2.4 H181" stroke="#4d88b6" stroke-width="2.2"/> <path d="M0 2.8 H181" stroke="#e8934a" stroke-width="1.6" stroke-dasharray="1.6 2.6"/></svg><div class="b" style="left:149.6px;top:394px;width:1.2px;height:6px;background:#333;"></div><div class="b" style="left:328.2px;top:394px;width:1.2px;height:6px;background:#333;"></div><div class="b" style="left:54.6px;top:123.6px;width:4.6px;height:1.2px;background:#333;"></div><div class="b" style="left:54.6px;top:302.4px;width:4.6px;height:1.2px;background:#333;"></div><span class="t " style="left:98.2px;top:8.5px;font-size:19.6px;letter-spacing:0.020px;color:#303030;">Training and Validation Accuracy</span><span class="t " style="left:122.2px;top:114.7px;font-size:19px;letter-spacing:-0.011px;color:#f4f6fa;">32423</span><span class="t " style="left:307.8px;top:114.7px;font-size:19px;transform:scaleX(0.9697);transform-origin:0 50%;color:#3a3a3a;">1792</span><span class="t " style="left:126.0px;top:293.7px;font-size:19px;letter-spacing:0.106px;color:#3a3a3a;">4712</span><span class="t " style="left:307.8px;top:293.7px;font-size:19px;transform:scaleX(0.9790);transform-origin:0 50%;color:#3a3a3a;">4711</span><span class="t " style="left:117.4px;top:403.7px;font-size:16.8px;transform:scaleX(0.9801);transform-origin:0 50%;color:#303030;">Not Rain</span><span class="t " style="left:296.0px;top:403.7px;font-size:16.8px;transform:scaleX(0.9758);transform-origin:0 50%;color:#303030;">Will Rain</span><span class="t " style="left:184.6px;top:424.9px;font-size:16.8px;letter-spacing:-0.087px;color:#303030;">Predicted label</span><span class="t " style="left:4.6px;top:143.2px;font-size:16.8px;letter-spacing:-0.100px;color:#303030;transform:rotate(-90deg);transform-origin:center;">Not Rain</span><span class="t " style="left:3.8px;top:323.7px;font-size:16.8px;letter-spacing:-0.000px;color:#303030;transform:rotate(-90deg);transform-origin:center;">Will Rain</span><span class="t " style="left:-26.8px;top:206.3px;font-size:16.8px;letter-spacing:-0.142px;color:#303030;transform:rotate(-90deg);transform-origin:center;">Actual label</span><div class="b" style="left:187.8px;top:327.6px;width:222.4px;height:57px;background:rgba(255,255,255,0.8);border:1px solid rgba(204,204,204,0.8);border-radius:3px;box-sizing:border-box"></div><div class="b" style="left:194.2px;top:341.2px;width:37.4px;height:2.4px;background:#4a8fc4;"></div><svg class="i" style="left:194.2px;top:365.6px" width="38" height="4" viewBox="0 0 38 4" ><path d="M0 2 H38" stroke="#f0944a" stroke-width="2.2" stroke-dasharray="2.2 3.6"/></svg><span class="t " style="left:246.4px;top:332.9px;font-size:18.4px;letter-spacing:-0.092px;color:#303030;">Training accuracy</span><span class="t " style="left:246.4px;top:359.0px;font-size:18.4px;letter-spacing:-0.095px;color:#303030;">Validation accuracy</span></div></div></div><div class="b" style="left:579px;top:764px;width:92.6px;height:20.8px;background:#2a3944;border:1.2px solid #1c6db3;border-top-width:2.6px;border-radius:3px;box-sizing:border-box"></div><span class="t " style="left:583.6px;top:766.7px;font-size:12.5px;transform:scaleX(0.9376);transform-origin:0 50%;color:#e4e9ec;">IPython console</span><div class="b" style="left:674px;top:766px;width:31.600000000000023px;height:18.8px;background:#2b3a44;border-radius:3px"></div><span class="t " style="left:677.6px;top:766.7px;font-size:12.5px;transform:scaleX(0.8862);transform-origin:0 50%;color:#e4e9ec;">Files</span><div class="b" style="left:708px;top:766px;width:31.600000000000023px;height:18.8px;background:#2b3a44;border-radius:3px"></div><span class="t " style="left:711.6px;top:766.7px;font-size:12.5px;transform:scaleX(0.9098);transform-origin:0 50%;color:#e4e9ec;">Help</span><div class="b" style="left:742px;top:766px;width:96.60000000000002px;height:18.8px;background:#2b3a44;border-radius:3px"></div><span class="t " style="left:746.0px;top:766.7px;font-size:12.5px;transform:scaleX(0.9404);transform-origin:0 50%;color:#e4e9ec;">Variable explorer</span><div class="b" style="left:878.4px;top:766px;width:45.60000000000002px;height:18.8px;background:#2b3a44;border-radius:3px"></div><span class="t " style="left:882.0px;top:766.7px;font-size:12.5px;transform:scaleX(0.9664);transform-origin:0 50%;color:#e4e9ec;">History</span><div class="b" style="left:842.4px;top:764px;width:33.6px;height:24px;background:#4c5c67;border-radius:0 0 4px 4px"></div><div class="b" style="left:842.4px;top:764px;width:33.6px;height:3px;background:#1b6fb0;"></div><span class="t " style="left:845.6px;top:768.5px;font-size:12.5px;transform:scaleX(0.9354);transform-origin:0 50%;color:#e4e9ec;">Plots</span><div class="b" style="left:-10px;top:788px;width:1520px;height:27.4px;background:#2f3f47;"></div><svg class="i" style="left:740.6px;top:797px" width="13" height="12" viewBox="0 0 14 13" ><path d="M3.6 1 L0.8 3.8 L3.6 6.6 M8.4 1 L11.2 3.8 L8.4 6.6" stroke="#fff" stroke-width="1.4" fill="none"/><path d="M5.4 9 L8 11.6 L13 6.8" stroke="#fff" stroke-width="1.5" fill="none"/></svg><span class="t " style="left:762.0px;top:792.2px;font-size:12.5px;transform:scaleX(0.9422);transform-origin:0 50%;color:#e4e9ec;">LSP Python: ready</span><svg class="i" style="left:899.4px;top:795.2px" width="13" height="14" viewBox="0 0 13 14" ><path d="M6.5 1 L12 4 V10 L6.5 13 L1 10 V4 Z" fill="none" stroke="#fff" stroke-width="1.6" stroke-linejoin="round"/><path d="M1.4 4.2 L6.5 7 L11.6 4.2 M6.5 7 V12.6" stroke="#fff" stroke-width="1.4" fill="none"/></svg><span class="t " style="left:922.0px;top:792.2px;font-size:12.5px;transform:scaleX(0.9700);transform-origin:0 50%;color:#e4e9ec;">conda: base (Python 3.8.5)</span><span class="t " style="left:1107.0px;top:792.2px;font-size:12.5px;transform:scaleX(0.9334);transform-origin:0 50%;color:#e4e9ec;">Line 8, Col 20</span><span class="t " style="left:1218.0px;top:792.2px;font-size:12.5px;transform:scaleX(0.9147);transform-origin:0 50%;color:#e4e9ec;">UTF-8</span><span class="t " style="left:1289.4px;top:792.2px;font-size:12.5px;transform:scaleX(0.8452);transform-origin:0 50%;color:#e4e9ec;">CRLF</span><span class="t " style="left:1356.0px;top:792.2px;font-size:12.5px;transform:scaleX(0.9316);transform-origin:0 50%;color:#e4e9ec;">RW</span><span class="t " style="left:1417.6px;top:792.2px;font-size:12.5px;transform:scaleX(0.8783);transform-origin:0 50%;color:#e4e9ec;">Mem</span><div class="b" style="left:-10px;top:815.2px;width:1520px;height:3.4px;background:#f2f6fa;"></div><div class="b" style="left:1423px;top:775.4px;width:35px;height:34px;background:#262c31;"></div><div class="b" style="left:1459px;top:775.4px;width:34.6px;height:34px;background:#262c31;"></div><div class="b" style="left:1433px;top:786px;width:5px;height:15.4px;background:#c8caCC;"></div><div class="b" style="left:1443px;top:786px;width:5px;height:15.4px;background:#c8cacc;"></div><svg class="i" style="left:1465.4px;top:785.6px" width="21.4" height="16" viewBox="0 0 21.4 16" ><rect x="0.8" y="0.8" width="19.8" height="14.4" fill="none" stroke="#c8cacc" stroke-width="1.5"/><circle cx="10.7" cy="6" r="3.2" fill="#c8cacc"/><path d="M3.6 14.8 Q4.4 9.6 10.7 9.2 Q17 9.6 17.8 14.8 Z" fill="#c8cacc"/></svg><svg class="i" style="left:513px;top:440.6px" width="14" height="21" viewBox="0 0 14 21" ><path d="M1.2 1.2 V16.6 L4.8 13.2 L7.6 19.6 L10 18.6 L7.2 12.4 H12.2 Z" fill="#fff" stroke="#000" stroke-width="1.1" stroke-linejoin="round"/></svg><svg class="i" style="left:596px;top:768.6px" width="14" height="21" viewBox="0 0 14 21" ><path d="M1.2 1.2 V16.6 L4.8 13.2 L7.6 19.6 L10 18.6 L7.2 12.4 H12.2 Z" fill="#fff" stroke="#000" stroke-width="1.1" stroke-linejoin="round"/></svg>
</div>
</body></html>
